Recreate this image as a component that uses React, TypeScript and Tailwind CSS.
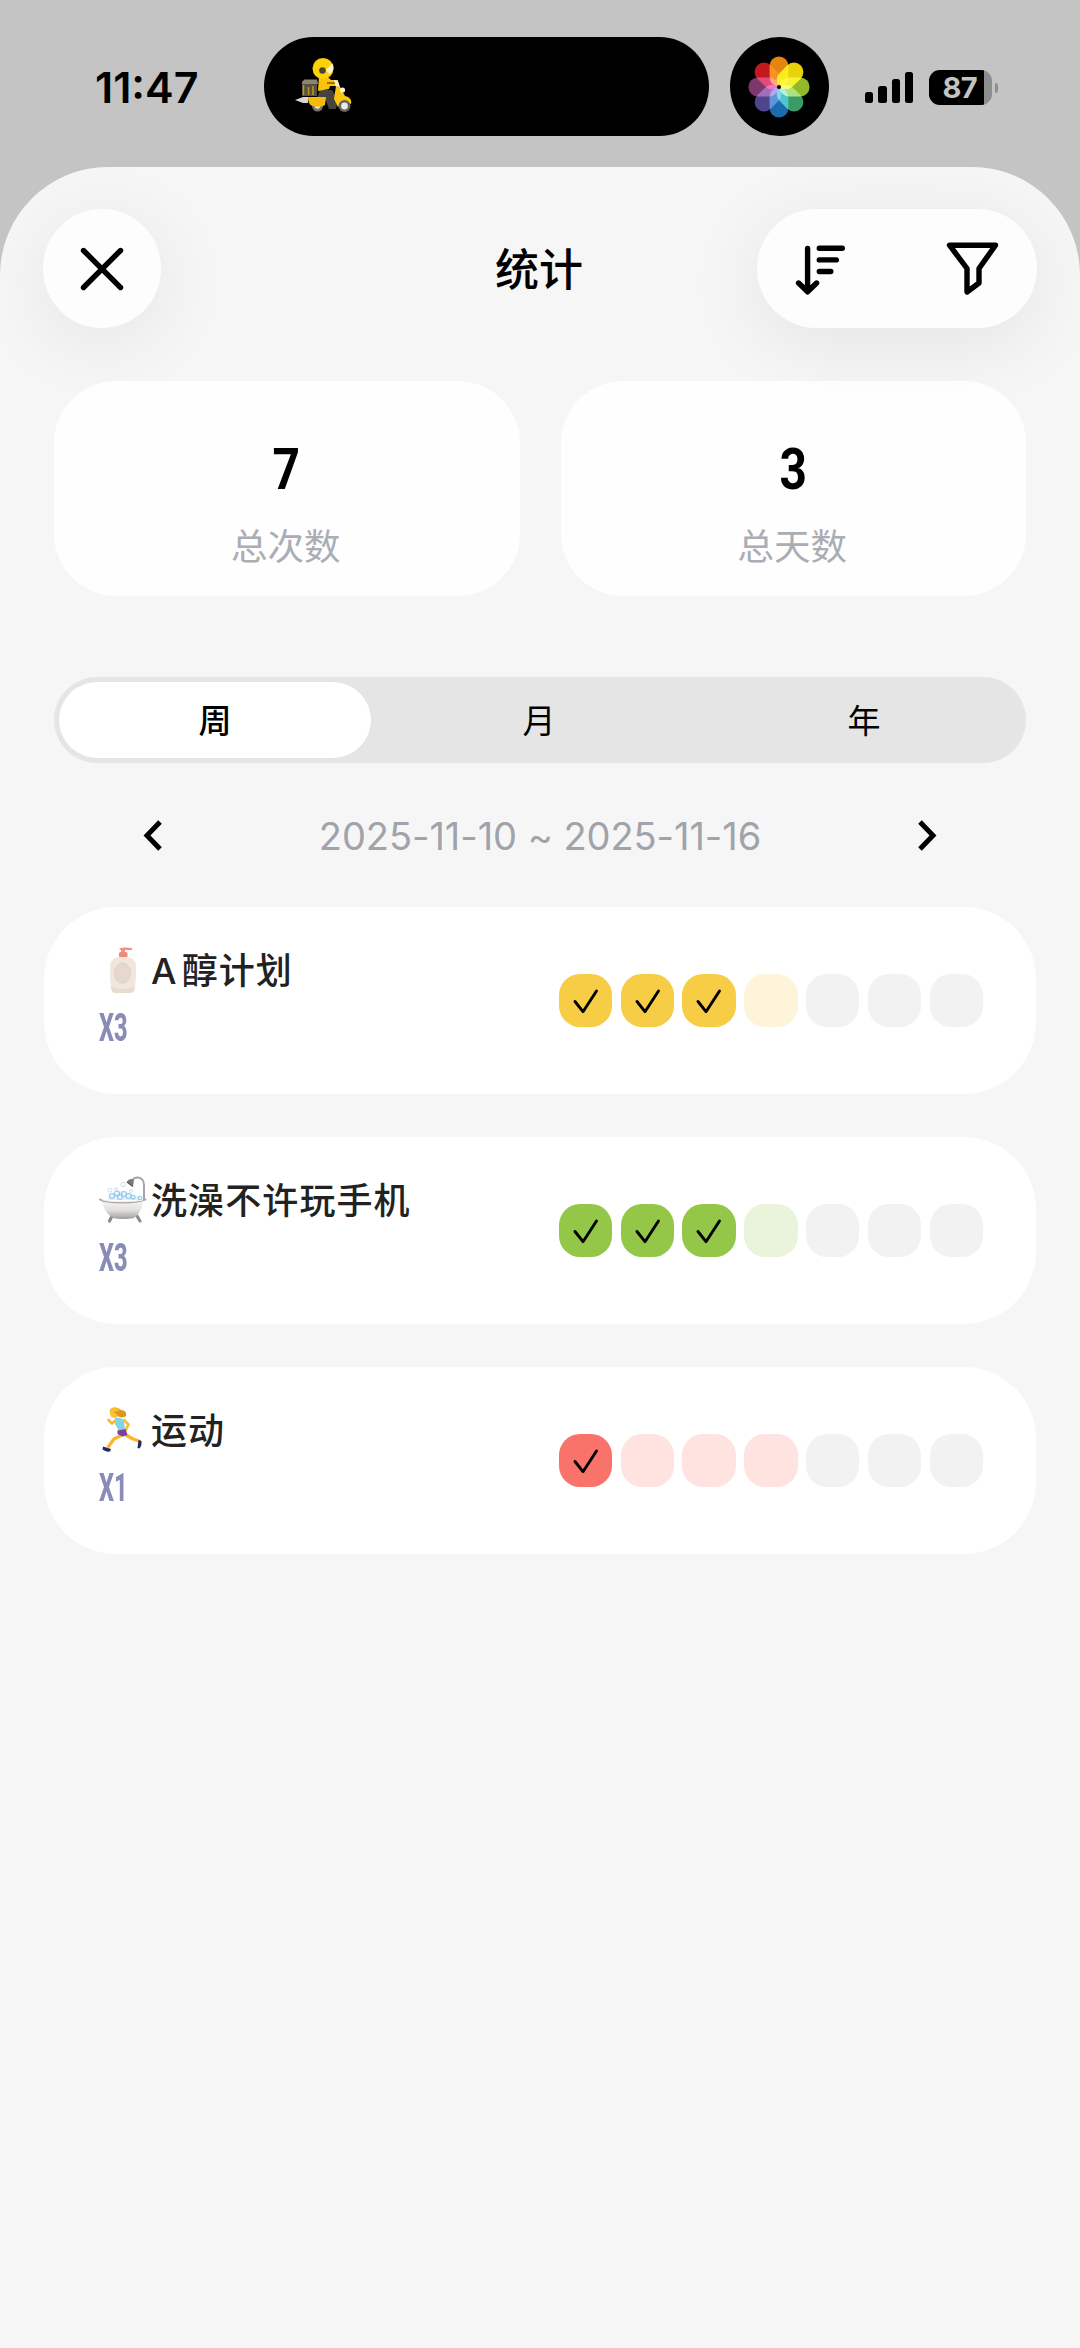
import type { ReactNode } from "react";

type CellState = "done" | "missed" | "future";

type Habit = {
  name: string;
  prefix?: string;
  count: number;
  icon: ReactNode;
  done: string;
  missed: string;
  cells: CellState[];
};

const PETALS = [
  { angle: 0, color: "#e5850f" },
  { angle: 45, color: "#e6d30c" },
  { angle: 90, color: "#93b828" },
  { angle: 135, color: "#3a9c64" },
  { angle: 180, color: "#1b6cac" },
  { angle: 225, color: "#4f448e" },
  { angle: 270, color: "#7c376c" },
  { angle: 315, color: "#c21a1c" },
];

function RiderIcon() {
  return (
    <svg width="60" height="60" viewBox="0 0 60 60" fill="none">
      <path d="M1 43l8-3h5v6H9z" fill="#d9d6da" />
      <rect x="8" y="24" width="15" height="15" fill="#55503f" />
      <path d="M10 22.500h13l1 4.500H7.500z" fill="#8b8373" />
      <path d="M9.500 28v10M14.500 30v8M19 29v9" stroke="#b79a22" strokeWidth="1.500" />
      <circle cx="23.500" cy="49" r="5.500" fill="#77756f" />
      <circle cx="23.500" cy="49" r="2.800" fill="#e8e6df" />
      <path d="M26 33h12l6 9-2 10h-7l-3-8-9-3z" fill="#46433e" />
      <path d="M14 40h18l-1 8c-3 2-8 2-12 1-3 0-5-4-5-9z" fill="#f6b90c" />
      <path d="M25 19h8l4 4h7v6h-8l-1 3-11 2z" fill="#fcc10d" />
      <path d="M33 26h9" stroke="#8a6a14" strokeWidth="1.800" />
      <path d="M40 23l4 1 3 9-4 1z" fill="#f3eee4" />
      <path d="M42 29l4 1 5 9c5 1 7 4 6 8l-6-2-7 5-4-8z" fill="#fbc60d" />
      <circle cx="50.500" cy="49" r="6" fill="#66645e" />
      <circle cx="50.500" cy="49" r="3.400" fill="#eceae4" />
      <circle cx="48.500" cy="33" r="2.600" fill="#fff4cf" />
      <circle cx="29" cy="11.500" r="10.500" fill="#fad207" />
      <path d="M38.500 6.500c2 4 1 8-3 10.500l-4-4z" fill="#fff1c4" />
      <circle cx="28.500" cy="13.500" r="3.300" fill="#4d4620" />
    </svg>
  );
}

function PhotosIcon() {
  return (
    <svg width="64" height="64" viewBox="-32 -32 64 64" className="isolate">
      {PETALS.map((petal) => (
        <rect
          key={petal.angle}
          x="-9.400"
          y="-30.600"
          width="18.800"
          height="30"
          rx="9.400"
          fill={petal.color}
          transform={`rotate(${petal.angle})`}
          className="mix-blend-screen"
        />
      ))}
      <circle r="2" fill="#000" />
    </svg>
  );
}

function LotionIcon() {
  return (
    <svg width="48" height="48" viewBox="0 0 48 48" fill="none">
      <path d="M20 3c3-2 8-1.500 13-1v2h-7v4h-4V4z" fill="#f2917c" />
      <rect x="20" y="6" width="8.500" height="5.500" rx="1.500" fill="#ee8a76" />
      <path
        d="M19 11h10c5 1 8 4 8 10 0 8 0 15-1.500 22-.5 3-2 4-5 4h-13c-3 0-4.500-1-5-4C11 36 11 29 11 21c0-6 3-9 8-10z"
        fill="#efe6dc"
      />
      <path
        d="M12 40c3 4 20 4 24 0l-.6 3.500c-.5 2.500-2 3.500-5 3.500h-13c-3 0-4.500-1-5-4z"
        fill="#e6dccf"
      />
      <ellipse cx="23.500" cy="27" rx="8" ry="10" fill="#e7d8cf" stroke="#e0cfc6" />
    </svg>
  );
}

function BathtubIcon() {
  return (
    <svg width="48" height="48" viewBox="0 0 48 48" fill="none">
      <defs>
        <linearGradient id="tub" x1="0" y1="0" x2="0" y2="1">
          <stop offset="0" stopColor="#f4f4f3" />
          <stop offset=".5" stopColor="#e2e1df" />
          <stop offset="1" stopColor="#a09f9d" />
        </linearGradient>
      </defs>
      <path d="M45 24V9c0-5-3-7.500-6.500-7.500-3 0-4.500 1.500-5 3" stroke="#a5a5a5" strokeWidth="2" />
      <path d="M28 6c1-3 5-4 7-2l-1 6z" fill="#77797c" />
      <path d="M28 6l6 4.500" stroke="#55585b" strokeWidth="1.500" />
      <path d="M9 24c0-4 4-7 8-6 3-4 8-4 10 0 3-2 7 0 8 3 3-2 7 0 8 3z" fill="#e4f2fb" />
      <g stroke="#93c6e7" strokeWidth="1.100">
        <circle cx="13" cy="20" r="2.500" />
        <circle cx="18" cy="17.500" r="2.500" />
        <circle cx="21" cy="21" r="2.500" />
        <circle cx="25" cy="18" r="2.500" />
        <circle cx="29.500" cy="20" r="2.500" />
        <circle cx="34" cy="21" r="2" />
        <circle cx="41" cy="22" r="1.800" />
      </g>
      <g stroke="#c6e2f3">
        <circle cx="24" cy="8.500" r="2.200" />
        <circle cx="11" cy="14" r="2" />
        <circle cx="17" cy="13" r="1.500" />
        <circle cx="32" cy="15" r="1.500" />
      </g>
      <path d="M13 40l-2.500 5M38 40l3 5" stroke="#8d8c8b" strokeWidth="3.200" strokeLinecap="round" />
      <path d="M3 25h41c-1 8-4 13-9 17-6 1.300-16 1.300-21 0C8 38 4 32 3 25z" fill="url(#tub)" />
      <path
        d="M1 23.500c4 2.500 11 3 22.500 3S42 26 46.500 23.500"
        stroke="#a9a8a7"
        strokeWidth="2"
        strokeLinecap="round"
      />
      <path d="M3 23.500c5 1.700 12 2.200 20.500 2.200S39 25.200 44 24" stroke="#f1f1f1" strokeWidth="1.200" />
    </svg>
  );
}

function RunnerIcon() {
  return (
    <svg width="48" height="48" viewBox="0 0 48 48" fill="none">
      <path
        d="M23 29l-8 4-5.500 7.500"
        stroke="#fbb62f"
        strokeWidth="3.400"
        strokeLinecap="round"
        strokeLinejoin="round"
      />
      <path d="M27 29l7 4 6 2" stroke="#fbb62f" strokeWidth="3.400" strokeLinecap="round" strokeLinejoin="round" />
      <path d="M4 40.500l8 2.500-1 2.500c-3 .5-5.500-.5-7.500-2z" fill="#27265f" />
      <path d="M39.500 34l3 1c.3 3-.5 5.500-2 7.500l-2-.5z" fill="#27265f" />
      <path
        d="M17 14l-4 3.500-3.500-3.500"
        stroke="#fbb62f"
        strokeWidth="2.600"
        strokeLinecap="round"
        strokeLinejoin="round"
      />
      <path d="M16 12c4-1 7 0 9 3l1 8-6 2-4-7z" fill="#86d2e8" />
      <path d="M25 14l4.500 4.500-3 6" stroke="#fdc03a" strokeWidth="2.800" strokeLinecap="round" strokeLinejoin="round" />
      <path d="M18.500 24.500l8-1.500 2 6-5 1.500-5-2.500z" fill="#7b3fa0" />
      <circle cx="15.500" cy="7.500" r="4.600" fill="#fdc23c" />
      <path d="M11 5c1-4 8-4 11-1 4 0 6 3 5 6-2 2-7 2-8.500-.5-2-3-4.500-3.500-7.500-4.500z" fill="#d9991c" />
      <path d="M10.500 6c0-5 7.500-6.500 10.500-2-3 2-6.500 2-10.500 2z" fill="#f9bd2c" />
    </svg>
  );
}

const habits: Habit[] = [
  {
    name: "醇计划",
    prefix: "A",
    count: 3,
    icon: <LotionIcon />,
    done: "bg-[#f7cd46]",
    missed: "bg-[#fef4d9]",
    cells: ["done", "done", "done", "missed", "future", "future", "future"],
  },
  {
    name: "洗澡不许玩手机",
    count: 3,
    icon: <BathtubIcon />,
    done: "bg-[#94c748]",
    missed: "bg-[#e9f4db]",
    cells: ["done", "done", "done", "missed", "future", "future", "future"],
  },
  {
    name: "运动",
    count: 1,
    icon: <RunnerIcon />,
    done: "bg-[#f9736b]",
    missed: "bg-[#fee3e1]",
    cells: ["done", "missed", "missed", "missed", "future", "future", "future"],
  },
];

function StatusBar() {
  return (
    <div className="flex h-[167px] items-start pt-[37px]">
      <div className="flex h-[99px] w-[264px] items-center pt-[2px] pl-[95px] text-[43px] font-semibold text-black">
        11:47
      </div>
      <div className="flex h-[99px] w-[445px] items-center rounded-full bg-black pl-[30px]">
        <RiderIcon />
      </div>
      <div className="ml-[21px] flex h-[99px] w-[99px] items-center justify-center rounded-full bg-black pr-[2px]">
        <PhotosIcon />
      </div>
      <div className="ml-[36px] flex h-[99px] items-center pt-[2px]">
        <div className="flex h-[31px] items-end gap-[5.200px]">
          <div className="h-[11.500px] w-[8.200px] rounded-[2.500px] bg-black" />
          <div className="h-[17.500px] w-[8.200px] rounded-[2.500px] bg-black" />
          <div className="h-[24px] w-[8.200px] rounded-[2.500px] bg-black" />
          <div className="h-[31px] w-[8.200px] rounded-[2.500px] bg-black" />
        </div>
        <div className="ml-[16px] flex h-[35px] w-[63px] items-stretch overflow-hidden rounded-[11px] bg-[#8d8d8d]">
          <div className="flex w-[55px] items-center justify-center bg-black pl-[6px] text-[29px] leading-none font-bold tracking-[-0.5px] text-[#c4c4c4]">
            87
          </div>
        </div>
        <div className="ml-[2.500px] h-[10px] w-[3.500px] rounded-r-full bg-[#8d8d8d]" />
      </div>
    </div>
  );
}

function Header() {
  return (
    <header className="flex h-[119px] items-center justify-between px-[43px]">
      <div className="flex w-[280px]">
        <button className="flex h-[119px] w-[118px] items-center justify-center rounded-full bg-[#fdfdfd] shadow-[0_14px_80px_rgba(0,0,0,0.075)]">
          <svg width="44" height="44" viewBox="0 0 44 44" stroke="#000" strokeWidth="5.400" strokeLinecap="round">
            <path d="M3.500 3.500l37 37M40.500 3.500l-37 37" />
          </svg>
        </button>
      </div>
      <h1 className="pt-[3px] pr-[2px] text-[44px] leading-none font-medium text-black">统计</h1>
      <div className="flex h-[119px] w-[280px] items-center justify-between rounded-full bg-[#fdfdfd] px-[37px] shadow-[0_14px_80px_rgba(0,0,0,0.08)]">
        <svg
          width="54"
          height="54"
          viewBox="0 0 54 54"
          fill="none"
          stroke="#000"
          strokeWidth="5.400"
          strokeLinecap="round"
          strokeLinejoin="round"
        >
          <path d="M13.600 6.500v43M4.600 41l9 8.800 9-8.800M25.300 6.200h23M25.300 17.900h17M25.300 29.500h11.500" />
        </svg>
        <svg
          width="54"
          height="54"
          viewBox="0 0 54 54"
          fill="none"
          stroke="#000"
          strokeWidth="5.400"
          strokeLinecap="round"
          strokeLinejoin="round"
        >
          <path d="M3.500 3.200h46L33 26.500V41l-12 9V26.500z" />
        </svg>
      </div>
    </header>
  );
}

function StatCard({ value, label }: { value: number; label: string }) {
  return (
    <div className="flex h-[215px] flex-1 flex-col items-center rounded-[62px] bg-white/85 pt-[61px]">
      <div className="scale-x-[0.84] font-[Roboto] text-[57px] leading-[56px] font-bold text-black">{value}</div>
      <div className="mt-[30px] pr-[2px] text-[36.500px] leading-[38px] text-[#abadb5]">{label}</div>
    </div>
  );
}

function Chevron({ flip }: { flip?: boolean }) {
  return (
    <svg
      width="20"
      height="32"
      viewBox="0 0 20 32"
      fill="none"
      stroke="#000"
      strokeWidth="5"
      className={flip ? "-scale-x-100" : ""}
    >
      <path d="M17 2L4 15.500 17 29" />
    </svg>
  );
}

function DayCell({ state, habit }: { state: CellState; habit: Habit }) {
  const color = state === "done" ? habit.done : state === "missed" ? habit.missed : "bg-[#f2f2f2]";
  return (
    <div className={`h-[53.500px] w-[53.500px] rounded-[21px] ${color}`}>
      {state === "done" && (
        <svg
          viewBox="0 0 53.5 53.5"
          fill="none"
          stroke="#000"
          strokeWidth="2.900"
          strokeLinecap="round"
          strokeLinejoin="round"
        >
          <path d="M16 27.500l8 10.200L37.500 17" />
        </svg>
      )}
    </div>
  );
}

function HabitCard({ habit }: { habit: Habit }) {
  return (
    <div className="flex h-[187px] justify-between rounded-[72px] bg-white pr-[53px] pl-[55px]">
      <div className="pt-[39px]">
        <div className="flex h-[48px] items-center gap-[4px]">
          {habit.icon}
          <span className="pt-[2px] text-[36px] leading-none font-medium tracking-[1.100px] text-[#222]">
            {habit.prefix && <span className="mr-[4px]">{habit.prefix}</span>}
            {habit.name}
          </span>
        </div>
        <div className="mt-[15px] origin-left scale-x-[0.62] font-[Roboto] text-[38px] leading-[38px] font-extrabold text-[#8a8cb8]">
          X{habit.count}
        </div>
      </div>
      <div className="flex items-center gap-[8.300px]">
        {habit.cells.map((state, i) => (
          <DayCell key={i} state={state} habit={habit} />
        ))}
      </div>
    </div>
  );
}

export default function App() {
  return (
    <div className="h-[2348px] w-[1080px] overflow-hidden bg-[#c4c4c4] font-[Inter,'Noto_Sans_CJK_SC',sans-serif]">
      <StatusBar />
      <main className="h-[2181px] overflow-hidden rounded-t-[108px] bg-[#f6f6f6] pt-[42px]">
        <Header />

        {/* Totals */}
        <section className="mt-[53px] flex gap-[41px] px-[54px]">
          <StatCard value={7} label="总次数" />
          <StatCard value={3} label="总天数" />
        </section>

        {/* Range switch */}
        <div className="relative mx-[54px] mt-[81px] grid h-[86px] grid-cols-3 items-center rounded-full bg-[#e5e5e5] text-center text-[33px] leading-none text-black">
          <div className="ml-[5px] flex h-[76px] w-[312px] items-center justify-center rounded-full bg-white pt-[2px] font-medium">
            周
          </div>
          <div className="pt-[2px] pr-[2px]">月</div>
          <div className="pt-[2px]">年</div>
        </div>

        {/* Week navigation */}
        <div className="mt-[49px] flex h-[48px] items-center justify-between px-[143px]">
          <Chevron />
          <span className="text-[38px] leading-none tracking-[-0.050px] text-[#a1a3ab]">2025-11-10 ~ 2025-11-16</span>
          <Chevron flip />
        </div>

        <section className="mt-[47px] flex flex-col gap-[43px] px-[44px]">
          {habits.map((habit) => (
            <HabitCard key={habit.name} habit={habit} />
          ))}
        </section>
      </main>
    </div>
  );
}
